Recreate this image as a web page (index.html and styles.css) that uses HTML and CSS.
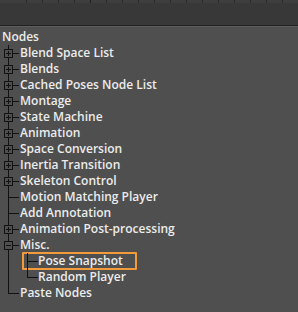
FILE: index.html
```html
<!DOCTYPE html>
<html lang="en">
<head>
    <meta charset="UTF-8">
    <title>Nodes</title>
    <link rel="stylesheet" href="styles.css">
</head>
<body>
    <div class="ruler">
        <span></span><span></span><span></span><span></span><span class="mark"></span>
        <span></span><span></span><span></span><span></span><span></span>
        <span></span><span></span><span></span><span></span><span></span>
        <span></span><span></span><span></span>
    </div>
    <div class="toolbar"></div>

    <div class="panel">
        <div class="title">Nodes</div>
        <ul class="tree">
            <li class="group"><div class="row"><span class="branch"><i class="box"></i></span><span class="label">Blend Space List</span></div></li>
            <li class="group"><div class="row"><span class="branch"><i class="box"></i></span><span class="label">Blends</span></div></li>
            <li class="group"><div class="row"><span class="branch"><i class="box"></i></span><span class="label">Cached Poses Node List</span></div></li>
            <li class="group"><div class="row"><span class="branch"><i class="box"></i></span><span class="label">Montage</span></div></li>
            <li class="group"><div class="row"><span class="branch"><i class="box"></i></span><span class="label">State Machine</span></div></li>
            <li class="group"><div class="row"><span class="branch"><i class="box"></i></span><span class="label">Animation</span></div></li>
            <li class="group"><div class="row"><span class="branch"><i class="box"></i></span><span class="label">Space Conversion</span></div></li>
            <li class="group"><div class="row"><span class="branch"><i class="box"></i></span><span class="label">Inertia Transition</span></div></li>
            <li class="group"><div class="row"><span class="branch"><i class="box"></i></span><span class="label">Skeleton Control</span></div></li>
            <li><div class="row"><span class="branch"></span><span class="label">Motion Matching Player</span></div></li>
            <li><div class="row"><span class="branch"></span><span class="label">Add Annotation</span></div></li>
            <li class="group"><div class="row"><span class="branch"><i class="box"></i></span><span class="label">Animation Post-processing</span></div></li>
            <li class="group open">
                <div class="row"><span class="branch"><i class="box"></i></span><span class="label">Misc.</span></div>
                <ul class="tree sub">
                    <li class="selected"><div class="row"><span class="branch"></span><span class="label">Pose Snapshot</span></div></li>
                    <li><div class="row"><span class="branch"></span><span class="label">Random Player</span></div></li>
                </ul>
            </li>
            <li><div class="row"><span class="branch"></span><span class="label">Paste Nodes</span></div></li>
        </ul>
    </div>
</body>
</html>
```

FILE: styles.css
```css
body {
    margin: 0;
    width: 298px;
    height: 312px;
    overflow: hidden;
    background-color: #4f4f4f;
    font-family: "Open Sans", "DejaVu Sans", sans-serif;
    font-size: 12px;
    font-weight: 600;
    color: #ececec;
}

/* strip of cells at the very top */
.ruler {
    display: flex;
    height: 3px;
    overflow: hidden;
    background-color: #3e3e3e;
    padding-left: 11px;
}

.ruler span {
    width: 16px;
    flex: none;
    border-right: 1px solid #2c2c2c;
    box-sizing: border-box;
}

.ruler .mark {
    border-right-color: #1c1c1c;
}

.toolbar {
    height: 22px;
    background-color: #383838;
    border-bottom: 1px solid #222;
    box-shadow: 0 1px 0 #5c5c5c;
}

.panel {
    padding-top: 3px;
}

.title {
    height: 16px;
    line-height: 16px;
    padding-left: 2px;
}

/* Tree */
.tree {
    list-style: none;
    margin: 0;
    padding: 0;
}

.tree li {
    position: relative;
}

.row {
    display: flex;
    height: 16px;
    line-height: 16px;
    white-space: nowrap;
}

.branch {
    position: relative;
    width: 20px;
    flex: none;
}

/* vertical connector */
.branch::before {
    content: '';
    position: absolute;
    left: 8px;
    top: 0;
    height: 16px;
    border-left: 1px solid #121212;
}

/* horizontal connector */
.branch::after {
    content: '';
    position: absolute;
    left: 8px;
    top: 8px;
    width: 11px;
    border-top: 1px solid #121212;
}

.tree > li:last-child > .row > .branch::before {
    height: 8px;
}

/* line keeps running past open groups */
.tree > li.open {
    background: linear-gradient(#121212, #121212) 8px 0 / 1px 100% no-repeat;
}

.box {
    position: absolute;
    z-index: 1;
    left: 4px;
    top: 4px;
    width: 9px;
    height: 9px;
    box-sizing: border-box;
    border: 1px solid #121212;
    background: #4f4f4f;
}

.box::before {
    content: '';
    position: absolute;
    left: 1px;
    right: 1px;
    top: 3px;
    border-top: 1px solid #121212;
}

.box::after {
    content: '';
    position: absolute;
    top: 1px;
    bottom: 1px;
    left: 3px;
    border-left: 1px solid #121212;
}

/* expanded group shows a minus */
.open > .row .box::after {
    display: none;
}

.sub {
    padding-left: 19px;
}

.sub .branch {
    width: 19px;
}

.selected::before {
    content: '';
    position: absolute;
    left: 3px;
    top: -1px;
    width: 115px;
    height: 18px;
    box-sizing: border-box;
    border: 2px solid #f39a3b;
    border-radius: 1px;
}
```
